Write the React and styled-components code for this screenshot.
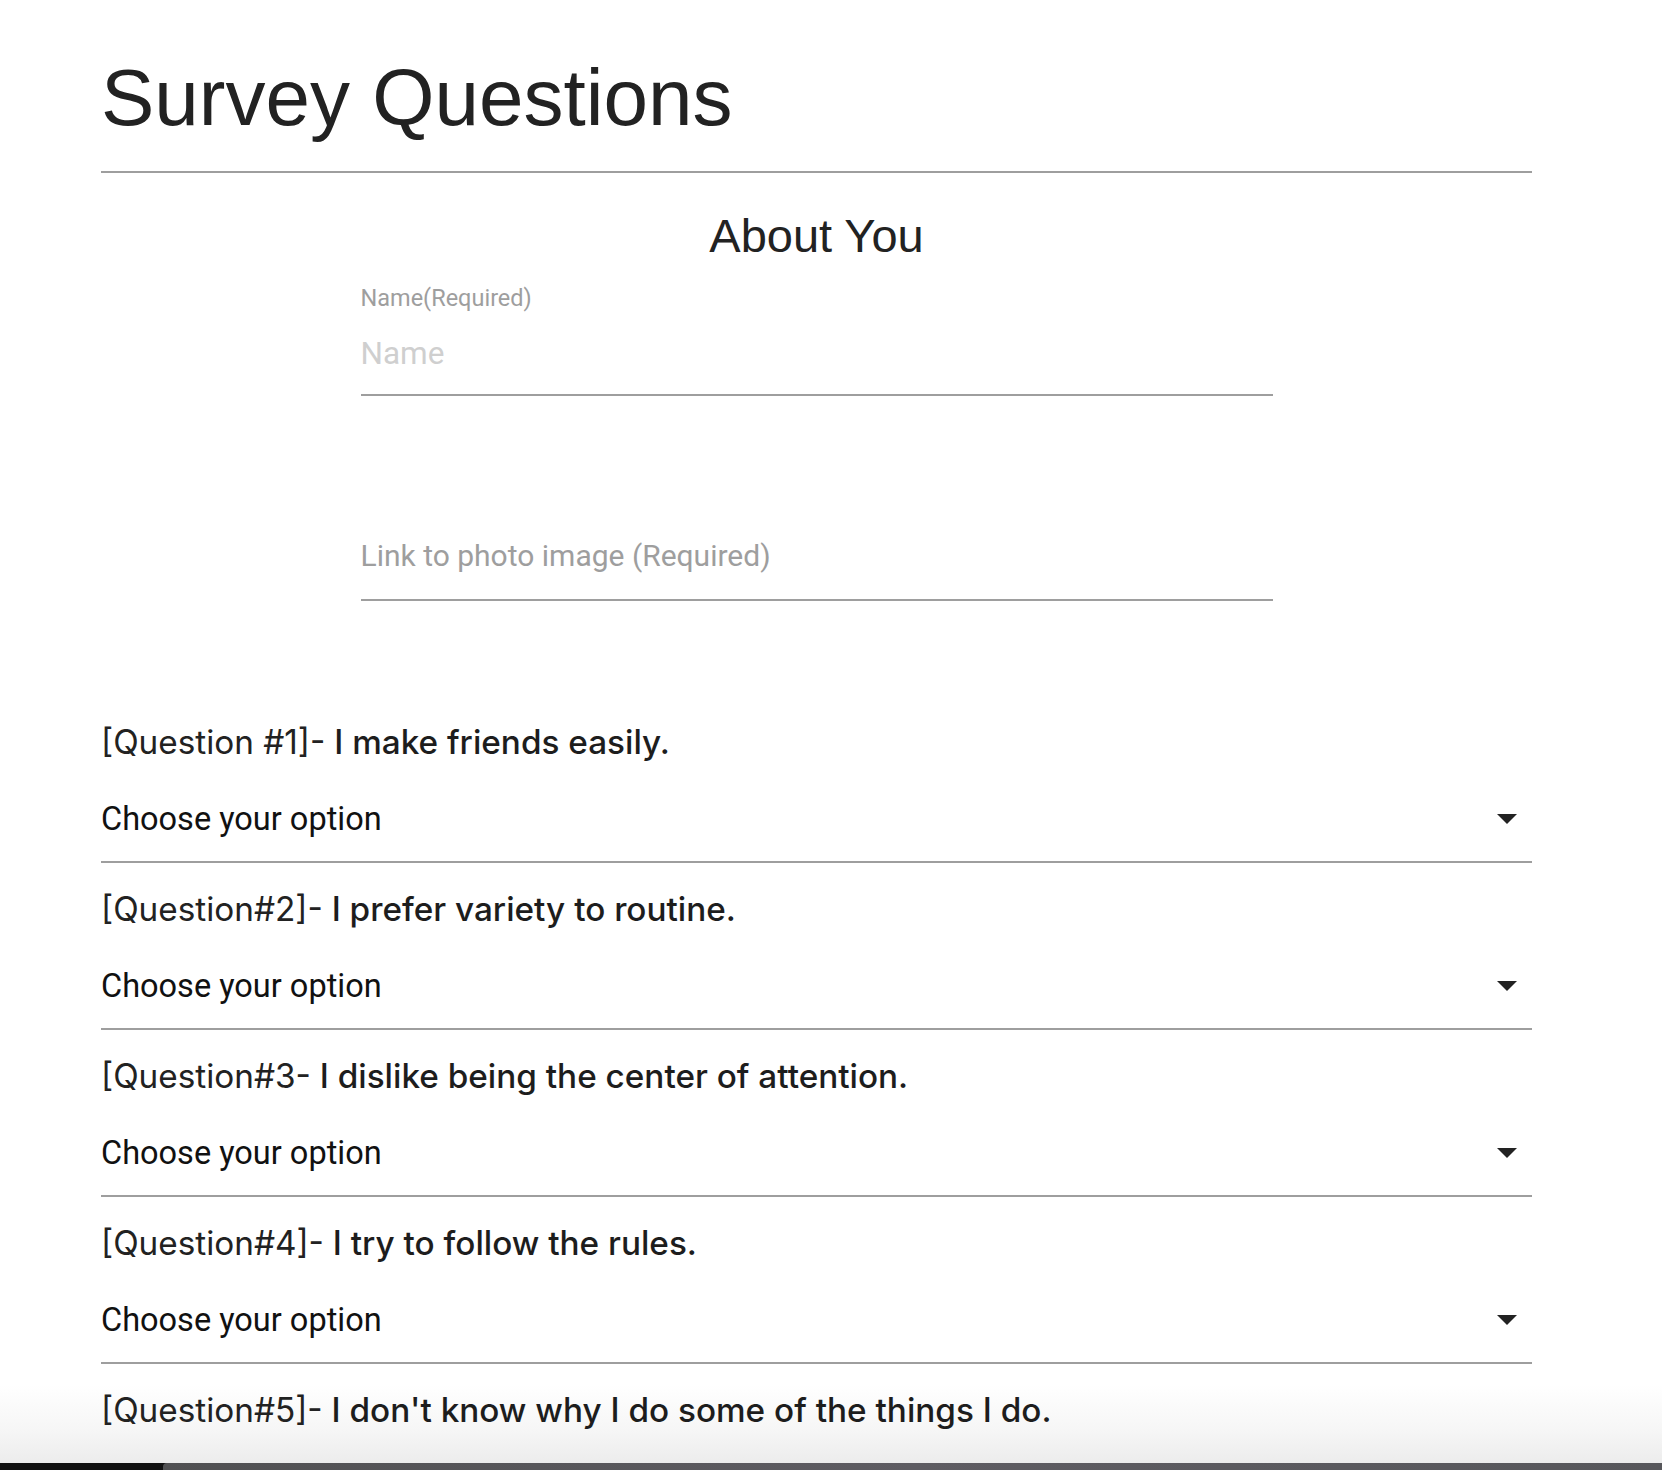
import styled, { createGlobalStyle } from "styled-components";

const GlobalStyle = createGlobalStyle`
  html, body {
    margin: 0;
    padding: 0;
    background: #fff;
  }
  body {
    font-family: Roboto, "Liberation Sans", sans-serif;
    color: rgba(0, 0, 0, 0.87);
  }
`;

const questions = [
  { tag: "[Question #1]-", text: "I make friends easily." },
  { tag: "[Question#2]-", text: "I prefer variety to routine." },
  { tag: "[Question#3-", text: "I dislike being the center of attention." },
  { tag: "[Question#4]-", text: "I try to follow the rules." },
  { tag: "[Question#5]-", text: "I don't know why I do some of the things I do." },
];

export default function App() {
  return (
    <>
      <GlobalStyle />
      <Page>
        <Main>
          <Container>
            <Title>Survey Questions</Title>
            <Divider />
            <FormColumn>
              <SectionTitle>About You</SectionTitle>
              <FieldLabel htmlFor="name">Name(Required)</FieldLabel>
              <TextInput id="name" placeholder="Name" $faint />
              <TextInput placeholder="Link to photo image (Required)" $gap />
            </FormColumn>

            <QuestionList>
              {questions.map((q, i) => (
                <QuestionBlock key={i}>
                  <QuestionText>
                    <QuestionTag>{q.tag}</QuestionTag> {q.text}
                  </QuestionText>
                  {/* the last select sits below the fold in the screenshot */}
                  {i < questions.length - 1 && (
                    <SelectBox>
                      <span>Choose your option</span>
                      <Caret viewBox="0 0 20 10">
                        <path d="M0 0 L20 0 L10 10 Z" />
                      </Caret>
                    </SelectBox>
                  )}
                </QuestionBlock>
              ))}
            </QuestionList>
          </Container>
        </Main>
        <Dock>
          <DockEdge />
        </Dock>
      </Page>
    </>
  );
}

const Page = styled.div`
  height: 1470px;
  overflow: hidden;
  display: flex;
  flex-direction: column;
  background: linear-gradient(
    to bottom,
    #fff 0,
    #fff 1385px,
    #f6f6f6 1430px,
    #ececec 1463px
  );
`;

const Main = styled.div`
  flex: 1;
  overflow: hidden;
`;

const Container = styled.div`
  width: 1431px;
  margin-left: 101px;
`;

const Title = styled.h1`
  margin: 0;
  padding-top: 58px;
  font-family: "Liberation Sans", Arial, sans-serif;
  font-size: 80px;
  line-height: 80px;
  font-weight: 400;
  color: #222;
`;

const Divider = styled.hr`
  margin: 33px 0 0;
  border: none;
  height: 2px;
  background: #9e9e9e;
`;

const FormColumn = styled.div`
  width: 912px;
  margin: 0 auto;
  display: flex;
  flex-direction: column;
`;

const SectionTitle = styled.h2`
  margin: 39px 0 0;
  text-align: center;
  font-family: "Liberation Sans", Arial, sans-serif;
  font-size: 47px;
  line-height: 47px;
  font-weight: 400;
  color: #222;
`;

const FieldLabel = styled.label`
  margin-top: 26px;
  font-size: 23.5px;
  line-height: 26px;
  color: #9e9e9e;
`;

const TextInput = styled.input`
  box-sizing: border-box;
  height: 82px;
  margin: ${(p) => (p.$gap ? "123px" : "3px")} 0 0;
  padding: 0 0 ${(p) => (p.$faint ? "2px" : "8px")};
  border: none;
  border-bottom: 2px solid #9e9e9e;
  outline: none;
  background: transparent;
  font-family: Roboto, sans-serif;
  font-size: ${(p) => (p.$faint ? "31.5px" : "30px")};
  color: #222;
  &::placeholder {
    color: ${(p) => (p.$faint ? "#cfcfcf" : "#9e9e9e")};
  }
`;

const QuestionList = styled.div`
  margin-top: 121px;
  display: flex;
  flex-direction: column;
  gap: 26px;
`;

const QuestionBlock = styled.div`
  display: flex;
  flex-direction: column;
  gap: 19px;
`;

const QuestionText = styled.div`
  font-family: Inter, Roboto, sans-serif;
  font-size: 33.3px;
  line-height: 40px;
  font-weight: 500;
  color: #1d1d1d;
  white-space: nowrap;
`;

const QuestionTag = styled.span`
  font-weight: 400;
  color: #222;
`;

const SelectBox = styled.div`
  box-sizing: border-box;
  height: 82px;
  display: flex;
  align-items: center;
  justify-content: space-between;
  padding: 0 15px 4px 0;
  border-bottom: 2px solid #9e9e9e;
  font-size: 32.5px;
  color: #111;
`;

const Caret = styled.svg`
  width: 20px;
  height: 10px;
  fill: #222;
`;

const Dock = styled.div`
  height: 7px;
  background: #111;
  display: flex;
  justify-content: flex-end;
`;

const DockEdge = styled.div`
  width: calc(100% - 163px);
  background: linear-gradient(to right, #505052, #5e5c62, #57575b);
  border-top-left-radius: 4px;
`;
